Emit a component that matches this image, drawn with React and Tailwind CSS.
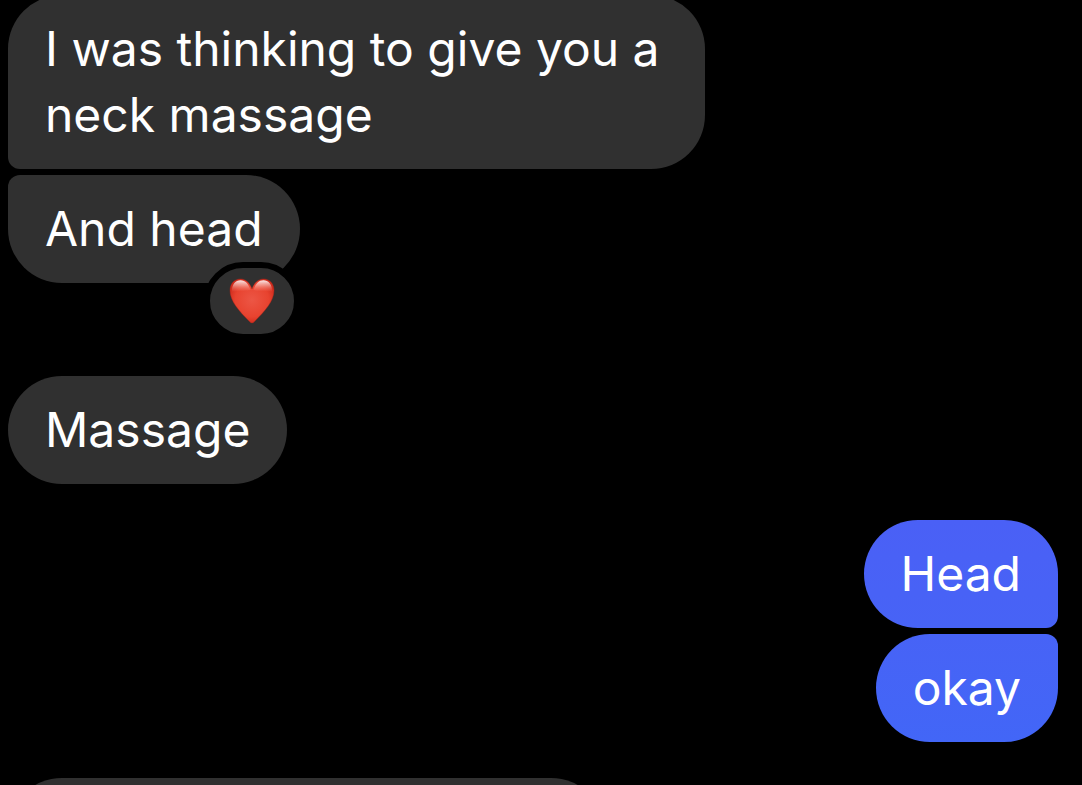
import React from "react";
import clsx from "clsx";

const messages = [
    { id: 1, text: "I was thinking to give you a neck massage", shape: "rounded-bl-xl" },
    { id: 2, text: "And head", shape: "mt-1.5 rounded-tl-xl", reaction: true },
    { id: 3, text: "Massage", shape: "mt-[93px]" },
    { id: 4, text: "Head", mine: true, shape: "mt-9 rounded-br-xl from-[#4a60f6] to-[#4763f6]" },
    { id: 5, text: "okay", mine: true, shape: "mt-1.5 rounded-tr-xl from-[#4763f6] to-[#4266f7]" },
];

const HeartIcon = () => (
    <svg viewBox="0 0 46 46" className="h-[46px] w-[46px]" role="img" aria-label="Heart">
        <defs>
            <radialGradient id="heartFill" cx="23" cy="22" r="24" gradientUnits="userSpaceOnUse">
                <stop offset="0" stopColor="#ec5645" />
                <stop offset="0.7" stopColor="#e8432f" />
                <stop offset="1" stopColor="#cf2c1d" />
            </radialGradient>
            <linearGradient id="heartShine" x1="0" y1="0" x2="0" y2="1">
                <stop offset="0" stopColor="#fff" stopOpacity="0.9" />
                <stop offset="0.45" stopColor="#ffd9d4" stopOpacity="0.5" />
                <stop offset="1" stopColor="#ff8a7a" stopOpacity="0" />
            </linearGradient>
        </defs>
        <path
            d="M23 11C20.8 4.600 16.500 1 11.500 1C5 1 1 6 1 12.500C1 23 10 33 20.500 43.500Q23 46.500 25.500 43.500C36 33 45 23 45 12.500C45 6 41 1 34.500 1C29.500 1 25.200 4.600 23 11Z"
            fill="url(#heartFill)"
            stroke="#b82216"
            strokeOpacity="0.5"
            strokeWidth="0.8"
        />
        <path d="M3 14C2.500 6.500 6.500 2.300 11.500 2.300C16.500 2.300 19.500 6 21.500 12C17 13.500 8 11.500 3 14Z" fill="url(#heartShine)" />
        <path d="M43 14C43.500 6.500 39.500 2.300 34.500 2.300C29.500 2.300 26.500 6 24.500 12C29 13.500 38 11.500 43 14Z" fill="url(#heartShine)" />
    </svg>
);

const Message = ({ message }) => (
    <div
        className={clsx(
            "relative max-w-[697px] rounded-[54px] px-[37px] py-[21px]",
            message.mine ? "self-end bg-gradient-to-b" : "self-start bg-[#303030]",
            message.shape
        )}
    >
        <p>{message.text}</p>
        {message.reaction && (
            <button
                type="button"
                className="absolute right-0 -bottom-[57px] flex h-[78px] w-24 items-center justify-center rounded-[39px] border-6 border-black bg-[#303030]"
            >
                <HeartIcon />
            </button>
        )}
    </div>
);

const App = () => {
    return (
        <main className="h-screen overflow-hidden bg-black font-['Inter','Liberation_Sans',sans-serif] text-5xl leading-[66px] text-white">
            <div className="-mt-[5px] flex flex-col pr-6 pl-2">
                {messages.map((message) => (
                    <Message key={message.id} message={message} />
                ))}
                {/* Next message, still below the fold */}
                <div className="mt-9 h-[108px] w-full max-w-[597px] shrink-0 rounded-[54px] bg-[#303030]" />
            </div>
        </main>
    );
};

export default App;
